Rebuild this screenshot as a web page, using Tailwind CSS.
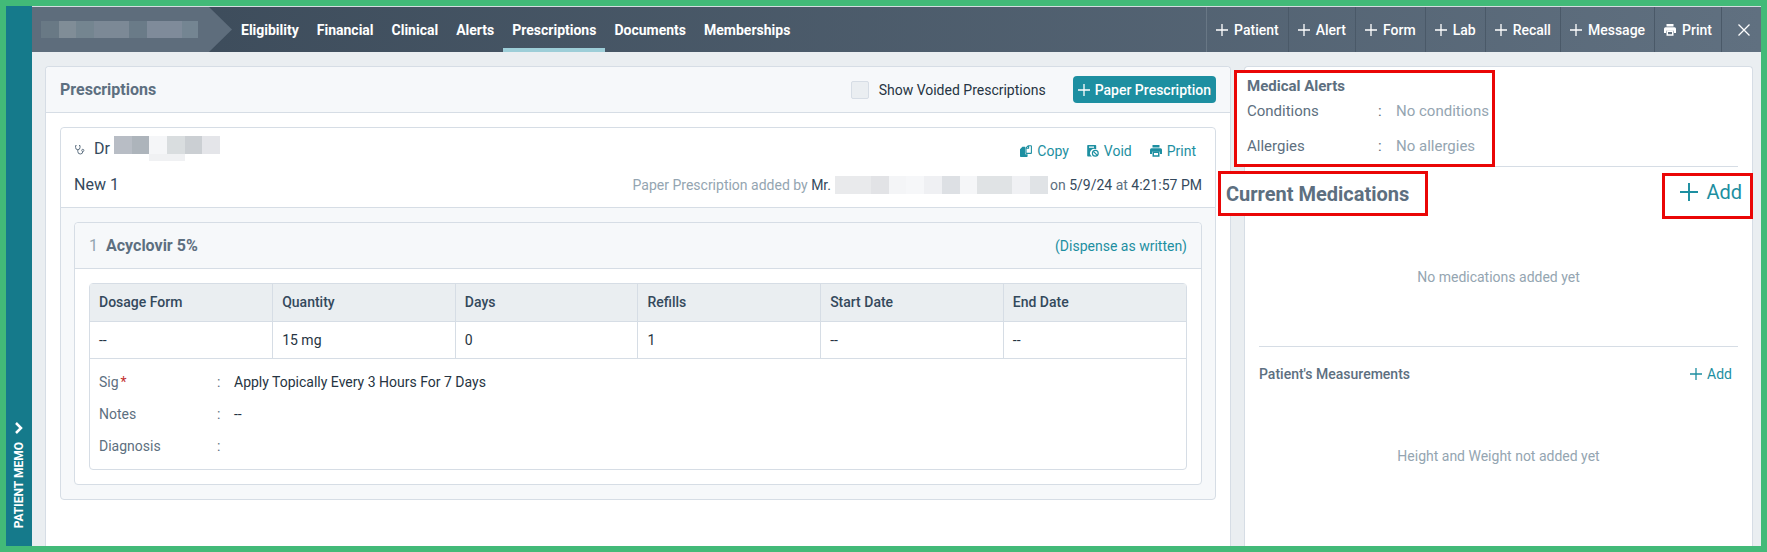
<!DOCTYPE html>
<html lang="en">
    <head>
        <meta charset="UTF-8" />
        <meta name="viewport" content="width=device-width, initial-scale=1.0" />
        <title>Prescriptions</title>
        <script src="https://cdn.jsdelivr.net/npm/@tailwindcss/browser@4"></script>
    </head>
    <body class="min-h-screen flex border-6 border-[#42ba78] bg-[#eaeef1] font-[Roboto,sans-serif] text-sm text-[#263442]">
        <!-- icon sprites -->
        <svg class="hidden" aria-hidden="true">
            <symbol id="icon-plus" viewBox="0 0 12 12">
                <path d="M6 0v12M0 6h12" fill="none" stroke="currentColor" stroke-width="1.3" />
            </symbol>
            <symbol id="icon-print" viewBox="0 0 12 12">
                <path fill="currentColor" d="M2.500 0h7v2.400h-7zM1.500 3.300h9A1.500 1.500 0 0 1 12 4.800v4.200H10V6.700H2V9H0V4.800a1.500 1.500 0 0 1 1.500-1.500z" />
                <path fill="currentColor" fill-rule="evenodd" d="M2.500 6.500h7v5.200h-7zM4 8v2.300h4V8z" />
            </symbol>
            <symbol id="icon-copy" viewBox="0 0 12 12">
                <path fill="currentColor" d="M2.400 1.800h2.800v7.400h2.400v2a.8.8 0 0 1-.8.800H.8a.8.8 0 0 1-.8-.8V4.200z" />
                <path fill="none" stroke="currentColor" stroke-width="1.100" d="M6 2.900 8.200.7h2.700a.5.500 0 0 1 .5.500v6.700a.5.500 0 0 1-.5.500H6.500a.5.500 0 0 1-.5-.5zM6 3.300h2.600V.8" />
            </symbol>
            <symbol id="icon-void" viewBox="0 0 12 12">
                <path fill="currentColor" fill-rule="evenodd" d="M1 0h7.400a.8.8 0 0 1 .8.800v3.500a4.200 4.200 0 0 0-4.300 7.200H1a.8.8 0 0 1-.8-.8V.8A.8.8 0 0 1 1 0zm1 1.600v1.100h5V1.600z" />
                <circle cx="8.300" cy="8.300" r="2.900" fill="none" stroke="currentColor" stroke-width="1.200" />
                <path fill="none" stroke="currentColor" stroke-width="1.200" d="m6.300 6.300 4 4" />
            </symbol>
            <symbol id="icon-stethoscope" viewBox="0 0 12 12">
                <path fill="none" stroke="currentColor" stroke-width="1" d="M2.500 2.500H1.600V4.500a2.200 2.200 0 0 0 4.400 0v-2H5M3.800 6.800v1.700a2.500 2.500 0 0 0 5 0V8.400" />
                <circle cx="8.800" cy="7.400" r="1.100" fill="none" stroke="currentColor" stroke-width=".9" />
            </symbol>
        </svg>

        <!-- patient memo tab -->
        <button class="w-[26px] shrink-0 flex flex-col items-center justify-end gap-2 pb-[18px] bg-[#157a8b] text-white">
            <svg class="w-3 h-3" viewBox="0 0 12 12"><path d="m3 1 5 5-5 5" fill="none" stroke="currentColor" stroke-width="2.500" /></svg>
            <span class="[writing-mode:vertical-rl] rotate-180 text-xs font-bold">PATIENT MEMO</span>
        </button>

        <div class="flex-1 min-w-0 flex flex-col">
            <header class="flex h-[46px] border-t border-[#d5dde0] bg-linear-to-r from-[#3a4958] to-[#607080] text-white">
                <div class="w-[200px] shrink-0 flex items-center pl-[9px] bg-[#5e6d7c] [clip-path:polygon(0_0,177px_0,100%_50%,177px_100%,0_100%)]">
                    <div class="flex h-[17px]">
                        <div class="w-[18px] bg-[#697985]"></div>
                        <div class="w-[17px] bg-[#808d97]"></div>
                        <div class="w-[18px] bg-[#748590]"></div>
                        <div class="w-[35px] bg-[#7c8996]"></div>
                        <div class="w-[18px] bg-[#6a7b88]"></div>
                        <div class="w-[35px] bg-[#7f8b9a]"></div>
                        <div class="w-[16px] bg-[#748592]"></div>
                    </div>
                </div>
                <nav class="flex font-bold leading-[47px]">
                    <a href="#" class="px-[9px]">Eligibility</a>
                    <a href="#" class="px-[9px]">Financial</a>
                    <a href="#" class="px-[9px]">Clinical</a>
                    <a href="#" class="px-[9px]">Alerts</a>
                    <a href="#" class="px-[9px] border-b-4 border-[#9dced8]">Prescriptions</a>
                    <a href="#" class="px-[9px]">Documents</a>
                    <a href="#" class="px-[9px]">Memberships</a>
                </nav>
                <div class="ml-auto flex font-medium">
                    <button class="flex items-center gap-1.5 px-[9px] border-l border-[#687785]"><svg class="w-3 h-3"><use href="#icon-plus" /></svg>Patient</button>
                    <button class="flex items-center gap-1.5 px-[9px] border-l border-[#4a5968]"><svg class="w-3 h-3"><use href="#icon-plus" /></svg>Alert</button>
                    <button class="flex items-center gap-1.5 px-[9px] border-l border-[#4a5968]"><svg class="w-3 h-3"><use href="#icon-plus" /></svg>Form</button>
                    <button class="flex items-center gap-1.5 px-[9px] border-l border-[#4a5968]"><svg class="w-3 h-3"><use href="#icon-plus" /></svg>Lab</button>
                    <button class="flex items-center gap-1.5 px-[9px] border-l border-[#4a5968]"><svg class="w-3 h-3"><use href="#icon-plus" /></svg>Recall</button>
                    <button class="flex items-center gap-1.5 px-[9px] border-l border-[#4a5968]"><svg class="w-3 h-3"><use href="#icon-plus" /></svg>Message</button>
                    <button class="flex items-center gap-1.5 px-[9px] border-l border-[#4a5968]"><svg class="w-3 h-3"><use href="#icon-print" /></svg>Print</button>
                    <button class="flex items-center justify-center w-10 pl-1 border-l border-[#4a5968]" aria-label="Close">
                        <svg class="w-3 h-3" viewBox="0 0 12 12"><path d="m.5.5 11 11m0-11-11 11" fill="none" stroke="currentColor" stroke-width="1.300" /></svg>
                    </button>
                </div>
            </header>

            <div class="flex-1 flex gap-[13px] pt-3.5 pl-[13px] pr-2">
                <!-- prescriptions -->
                <main class="flex-1 min-w-0 border border-b-0 border-[#d6dde5] rounded-t bg-white">
                    <div class="flex items-center h-[46px] px-3.5 border-b border-[#d6dde5] rounded-t bg-[#f6f8fa]">
                        <h1 class="text-base font-bold text-[#5d6f80]">Prescriptions</h1>
                        <label class="ml-auto flex items-center gap-2.5">
                            <input type="checkbox" class="appearance-none w-[18px] h-[18px] border border-[#d6dde5] rounded-xs bg-[#eaeef1]" />
                            Show Voided Prescriptions
                        </label>
                        <button class="ml-[27px] flex items-center gap-[5px] h-[27px] px-[5px] rounded bg-[#1d8fa1] font-medium text-white">
                            <svg class="w-3 h-3"><use href="#icon-plus" /></svg>Paper Prescription
                        </button>
                    </div>

                    <div class="m-3.5 border border-[#d6dde5] rounded bg-[#f6f8fa]">
                        <div class="px-[13px] pt-2 pb-2.5 border-b border-[#d6dde5] rounded-t bg-white">
                            <div class="flex justify-between">
                                <div class="flex items-center text-base text-[#34495c]">
                                    <svg class="w-3 h-3 text-[#5d6f80]"><use href="#icon-stethoscope" /></svg>
                                    <span class="ml-2 mr-1">Dr</span>
                                    <div class="h-[25px]">
                                        <div class="flex h-[18px]">
                                            <div class="w-[18px] bg-[#b8bdc5]"></div>
                                            <div class="w-[17px] bg-[#adb4bb]"></div>
                                            <div class="w-[18px] bg-[#f5f6f8]"></div>
                                            <div class="w-[18px] bg-[#d9dddf]"></div>
                                            <div class="w-[17px] bg-[#cbcfd3]"></div>
                                            <div class="w-[18px] bg-[#e4e5e9]"></div>
                                        </div>
                                        <div class="ml-[35px] w-9 h-[7px] bg-[#f0f1f3]"></div>
                                    </div>
                                </div>
                                <div class="flex items-center gap-[18px] pt-1 pr-1.5 text-[#1d8fa1]">
                                    <button class="flex items-center gap-[5px]"><svg class="w-3 h-3"><use href="#icon-copy" /></svg>Copy</button>
                                    <button class="flex items-center gap-[5px]"><svg class="w-3 h-3"><use href="#icon-void" /></svg>Void</button>
                                    <button class="flex items-center gap-[5px]"><svg class="w-3 h-3"><use href="#icon-print" /></svg>Print</button>
                                </div>
                            </div>
                            <div class="flex items-center justify-between pt-3">
                                <div class="text-base text-[#34495c]">New 1</div>
                                <div class="flex items-center text-[#34495c]">
                                    <span><span class="text-[#94a5b1]">Paper Prescription added by</span> Mr.</span>
                                    <div class="flex h-[18px] ml-1 mr-0.5">
                                        <div class="w-[36px] bg-[#e9eaec]"></div>
                                        <div class="w-[18px] bg-[#e2e3e6]"></div>
                                        <div class="w-[17px] bg-[#f4f5f7]"></div>
                                        <div class="w-[18px] bg-[#f6f7f9]"></div>
                                        <div class="w-[18px] bg-[#eff0f3]"></div>
                                        <div class="w-[18px] bg-[#dde0e4]"></div>
                                        <div class="w-[17px] bg-[#f5f6f8]"></div>
                                        <div class="w-[35px] bg-[#e0e3e5]"></div>
                                        <div class="w-[18px] bg-[#f0f1f4]"></div>
                                        <div class="w-[18px] bg-[#e0e3e6]"></div>
                                    </div>
                                    <span><span class="text-[#5d6f80]">on</span> 5/9/24 <span class="text-[#5d6f80]">at</span> 4:21:57 PM</span>
                                </div>
                            </div>
                        </div>

                        <div class="mx-[13px] my-3.5 border border-[#d6dde5] rounded bg-white">
                            <div class="flex items-center h-[46px] px-3.5 border-b border-[#d6dde5] rounded-t bg-[#f6f8fa]">
                                <span class="mr-2 text-base text-[#94a5b1]">1</span>
                                <h2 class="text-base font-bold text-[#5d6f80]">Acyclovir 5%</h2>
                                <span class="ml-auto text-[#1d8fa1]">(Dispense as written)</span>
                            </div>
                            <div class="m-3.5 border border-[#d6dde5] rounded">
                                <table class="w-full table-fixed text-left">
                                    <thead class="text-[#34495c]">
                                        <tr class="h-[37px] border-b border-[#d6dde5] bg-[#eaeef1]">
                                            <th class="px-[9px] font-medium">Dosage Form</th>
                                            <th class="px-[9px] font-medium border-l border-[#d6dde5]">Quantity</th>
                                            <th class="px-[9px] font-medium border-l border-[#d6dde5]">Days</th>
                                            <th class="px-[9px] font-medium border-l border-[#d6dde5]">Refills</th>
                                            <th class="px-[9px] font-medium border-l border-[#d6dde5]">Start Date</th>
                                            <th class="px-[9px] font-medium border-l border-[#d6dde5]">End Date</th>
                                        </tr>
                                    </thead>
                                    <tbody>
                                        <tr class="h-[37px] border-b border-[#d6dde5]">
                                            <td class="px-[9px]">--</td>
                                            <td class="px-[9px] border-l border-[#d6dde5]">15 mg</td>
                                            <td class="px-[9px] border-l border-[#d6dde5]">0</td>
                                            <td class="px-[9px] border-l border-[#d6dde5]">1</td>
                                            <td class="px-[9px] border-l border-[#d6dde5]">--</td>
                                            <td class="px-[9px] border-l border-[#d6dde5]">--</td>
                                        </tr>
                                    </tbody>
                                </table>
                                <dl class="grid grid-cols-[118px_17px_1fr] auto-rows-[32px] items-center px-[9px] py-[7px]">
                                    <dt class="text-[#5d6f80]">Sig<span class="ml-0.5 text-[#c22f2f]">*</span></dt>
                                    <span class="text-[#5d6f80]">:</span>
                                    <dd>Apply Topically Every 3 Hours For 7 Days</dd>
                                    <dt class="text-[#5d6f80]">Notes</dt>
                                    <span class="text-[#5d6f80]">:</span>
                                    <dd>--</dd>
                                    <dt class="text-[#5d6f80]">Diagnosis</dt>
                                    <span class="text-[#5d6f80]">:</span>
                                    <dd></dd>
                                </dl>
                            </div>
                        </div>
                    </div>
                </main>

                <!-- medical summary -->
                <aside class="relative w-[509px] shrink-0 px-3.5 border border-b-0 border-[#d6dde5] rounded-t bg-white">
                    <div class="h-[100px] border-b border-[#d6dde5]"></div>
                    <section class="h-[180px] pt-[100px] border-b border-[#d6dde5] text-center text-[#94a5b1]">
                        No medications added yet
                    </section>
                    <section class="pt-[17px]">
                        <div class="flex items-center justify-between pr-1.5">
                            <h2 class="font-medium text-[#5d6f80]">Patient's Measurements</h2>
                            <button class="flex items-center gap-[5px] text-[#1d8fa1]"><svg class="w-3 h-3"><use href="#icon-plus" /></svg>Add</button>
                        </div>
                        <p class="pt-[62px] text-center text-[#94a5b1]">Height and Weight not added yet</p>
                    </section>

                    <!-- highlighted callouts over the panel -->
                    <section class="absolute left-[-11px] top-[3px] w-[261px] h-[97px] pt-px px-2.5 border-3 border-[#ea0606] bg-white text-[15px] text-[#5d6f80]">
                        <h2 class="font-bold leading-6">Medical Alerts</h2>
                        <dl class="grid grid-cols-[131px_18px_1fr] gap-y-[11px] pt-px leading-6 whitespace-nowrap">
                            <dt>Conditions</dt>
                            <span>:</span>
                            <dd class="text-[#94a5b1]">No conditions</dd>
                            <dt>Allergies</dt>
                            <span>:</span>
                            <dd class="text-[#94a5b1]">No allergies</dd>
                        </dl>
                    </section>
                    <h2 class="absolute left-[-27px] top-[104px] w-[210px] h-[45px] px-[5px] border-3 border-[#ea0606] bg-white text-xl leading-10 font-bold whitespace-nowrap text-[#5d6f80]">Current Medications</h2>
                    <button class="absolute right-[-1px] top-[106px] w-[91px] h-[46px] flex items-center justify-end gap-2 pr-2 pb-2 border-3 border-[#ea0606] bg-white text-xl text-[#1d8fa1]">
                        <svg class="w-[18px] h-[18px]"><use href="#icon-plus" /></svg>Add
                    </button>
                </aside>
            </div>
        </div>
    </body>
</html>
